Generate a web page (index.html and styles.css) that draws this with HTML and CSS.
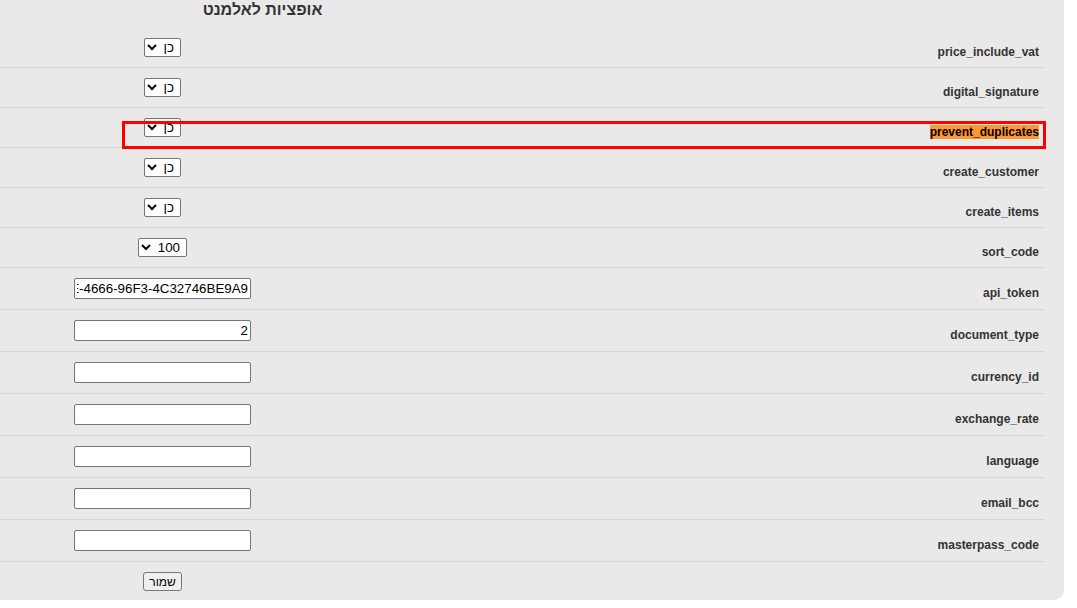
FILE: index.html
```html
<!DOCTYPE html>
<html lang="he">
<head>
<meta charset="utf-8">
<title>אופציות לאלמנט</title>
<link rel="stylesheet" href="styles.css">
</head>
<body>
<div class="panel">
  <h2 class="title">אופציות לאלמנט</h2>
  <table class="options" dir="rtl">
    <tr class="sel-row"><th class="label">price_include_vat</th><td class="ctrl"><select class="sel"><option>כן</option></select></td></tr>
    <tr class="sel-row"><th class="label">digital_signature</th><td class="ctrl"><select class="sel"><option>כן</option></select></td></tr>
    <tr class="sel-row"><th class="label"><span class="found">prevent_duplicates</span></th><td class="ctrl"><select class="sel"><option>כן</option></select></td></tr>
    <tr class="sel-row"><th class="label">create_customer</th><td class="ctrl"><select class="sel"><option>כן</option></select></td></tr>
    <tr class="sel-row"><th class="label">create_items</th><td class="ctrl"><select class="sel"><option>כן</option></select></td></tr>
    <tr class="sel-row"><th class="label">sort_code</th><td class="ctrl"><select class="sel"><option>100</option></select></td></tr>
    <tr class="in-row"><th class="label">api_token</th><td class="ctrl"><input class="field" type="text" value="7D3F2B91-0C5E-4666-96F3-4C32746BE9A9"></td></tr>
    <tr class="in-row"><th class="label">document_type</th><td class="ctrl"><input class="field" type="text" value="2"></td></tr>
    <tr class="in-row"><th class="label">currency_id</th><td class="ctrl"><input class="field" type="text" value=""></td></tr>
    <tr class="in-row"><th class="label">exchange_rate</th><td class="ctrl"><input class="field" type="text" value=""></td></tr>
    <tr class="in-row"><th class="label">language</th><td class="ctrl"><input class="field" type="text" value=""></td></tr>
    <tr class="in-row"><th class="label">email_bcc</th><td class="ctrl"><input class="field" type="text" value=""></td></tr>
    <tr class="in-row"><th class="label">masterpass_code</th><td class="ctrl"><input class="field" type="text" value=""></td></tr>
    <tr class="btn-row"><th class="label"></th><td class="ctrl"><button class="save" type="button">שמור</button></td></tr>
  </table>
  <div class="marker"></div>
</div>
</body>
</html>
```

FILE: styles.css
```css
html, body {
  margin: 0;
  padding: 0;
  background: #ffffff;
}

body {
  font-family: "Liberation Sans", Arial, sans-serif;
  color: #333333;
}

.panel {
  position: relative;
  width: 1044px;
  padding-right: 20px;
  height: 600px;
  background: #e9e9e9;
  border-bottom-right-radius: 10px;
}

.title {
  margin: 0;
  width: 525px;
  height: 28px;
  line-height: 20px;
  font-size: 16px;
  font-weight: bold;
  text-align: center;
  color: #333333;
}

.options {
  width: 1044px;
  border-collapse: separate;
  border-spacing: 0;
}

.options th,
.options td {
  border-bottom: 1px solid #d6d6d6;
}

.options tr.btn-row th,
.options tr.btn-row td {
  border-bottom: none;
}

.label {
  text-align: right;
  vertical-align: middle;
  font-size: 12px;
  line-height: 14px;
  font-weight: bold;
  color: #333333;
  padding: 13px 5px 5px 0;
}

.found {
  background: #ff9632;
  color: #000000;
}

.ctrl {
  width: 325px;
  text-align: center;
  vertical-align: middle;
  padding: 10px 0;
  font-size: 0;
  line-height: 0;
}

.sel-row .ctrl {
  height: 19px;
}

.in-row .ctrl {
  height: 21px;
}

.sel {
  height: 19px;
  padding: 0 2px;
  font-family: "Liberation Sans", Arial, sans-serif;
  font-size: 13.333px;
  line-height: normal;
  color: #000000;
  background: #ffffff;
  border: 1px solid #767676;
  border-radius: 2px;
  vertical-align: middle;
}

.field {
  box-sizing: border-box;
  width: 177px;
  height: 21px;
  padding: 1px 2px;
  font-family: "Liberation Sans", Arial, sans-serif;
  font-size: 13.333px;
  line-height: normal;
  color: #000000;
  background: #ffffff;
  border: 1px solid #767676;
  border-radius: 2px;
  vertical-align: middle;
}

.save {
  box-sizing: border-box;
  height: 19px;
  padding: 0 5px;
  font-family: "Liberation Sans", Arial, sans-serif;
  font-size: 12px;
  line-height: normal;
  color: #000000;
  background: #efefef;
  border: 1px solid #767676;
  border-radius: 3px;
  vertical-align: middle;
}

.marker {
  position: absolute;
  left: 122px;
  top: 121px;
  width: 924px;
  height: 28px;
  box-sizing: border-box;
  border: 3px solid #ff0000;
  pointer-events: none;
}
```
